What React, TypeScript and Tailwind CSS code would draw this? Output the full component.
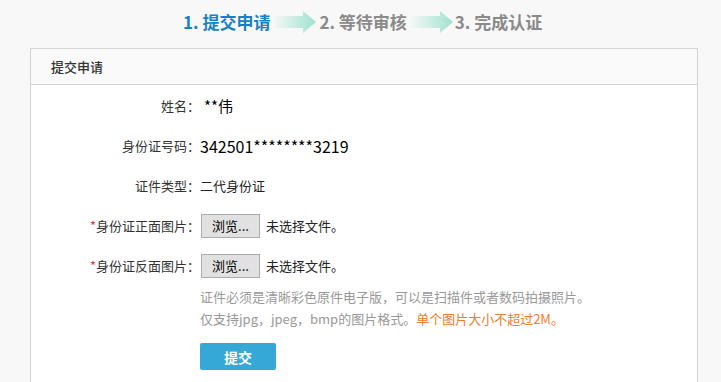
import React from "react";

const font = { fontFamily: '"Noto Sans CJK SC", "Noto Sans", sans-serif' };

function Arrow({ id }: { id: string }) {
  return (
    <svg width="44" height="22" viewBox="0 0 44 22" className="block">
      <defs>
        <linearGradient id={id} x1="0" y1="0" x2="1" y2="0">
          <stop offset="0" stopColor="#f8f8f8" />
          <stop offset="0.75" stopColor="#b5e8da" />
          <stop offset="1" stopColor="#9fdfcd" />
        </linearGradient>
      </defs>
      <path d="M0 5 H31 V0 L44 11 L31 22 V17 H0 Z" fill={`url(#${id})`} />
    </svg>
  );
}

function Row({
  label,
  required,
  children,
}: {
  label: string;
  required?: boolean;
  children: React.ReactNode;
}) {
  return (
    <div className="flex h-[40px] items-center">
      <div className="w-[169px] shrink-0 text-right text-[13px] text-[#333]">
        {required && <span className="text-[#e4393c]">*</span>}
        {label}：
      </div>
      <div className="flex items-center">{children}</div>
    </div>
  );
}

function FileInput() {
  return (
    <div className="flex items-center">
      <div className="ml-[1px] flex h-[24px] w-[59px] items-center justify-center border border-[#adadad] bg-[#e1e1e1] text-[13px] text-black">
        浏览...
      </div>
      <span className="ml-[6px] text-[13px] text-[#222]">未选择文件。</span>
    </div>
  );
}

export default function App() {
  return (
    <div className="h-[382px] w-[721px] overflow-hidden bg-[#f8f8f8]" style={font}>
      <div className="flex h-[44px] items-center pl-[183px] text-[17px] font-bold">
        <span className="text-[#1a80c4]">1. 提交申请</span>
        <span className="ml-[2px]">
          <Arrow id="a1" />
        </span>
        <span className="ml-[3px] text-[#8a8a8a]">2. 等待审核</span>
        <span className="ml-[2px]">
          <Arrow id="a2" />
        </span>
        <span className="ml-[2px] text-[#8a8a8a]">3. 完成认证</span>
      </div>
      <div className="ml-[30px] mt-[4px] h-[400px] w-[668px] border border-[#d4d4d4] bg-white">
        <div className="flex h-[36px] items-center border-b border-[#d4d4d4] bg-[#fafafa] pl-[20px] text-[13px] font-medium text-[#333]">
          提交申请
        </div>
        <div className="pt-[1px]">
          <Row label="姓名">
            <span className="ml-[4px] text-[15px] text-black">**伟</span>
          </Row>
          <Row label="身份证号码">
            <span className="text-[16px] text-black">342501********3219</span>
          </Row>
          <Row label="证件类型">
            <span className="text-[13px] text-[#222]">二代身份证</span>
          </Row>
          <Row label="身份证正面图片" required>
            <FileInput />
          </Row>
          <Row label="身份证反面图片" required>
            <FileInput />
          </Row>
          <div className="pl-[169px] text-[13px] leading-[22px] text-[#999]">
            <div>证件必须是清晰彩色原件电子版，可以是扫描件或者数码拍摄照片。</div>
            <div>
              仅支持jpg，jpeg，bmp的图片格式。
              <span className="text-[#f07c2a]">单个图片大小不超过2M。</span>
            </div>
            <div className="mt-[13px] flex h-[27px] w-[76px] items-center justify-center rounded-[2px] bg-[#35a8d8] text-[14px] font-bold text-white">
              提交
            </div>
          </div>
        </div>
      </div>
    </div>
  );
}
